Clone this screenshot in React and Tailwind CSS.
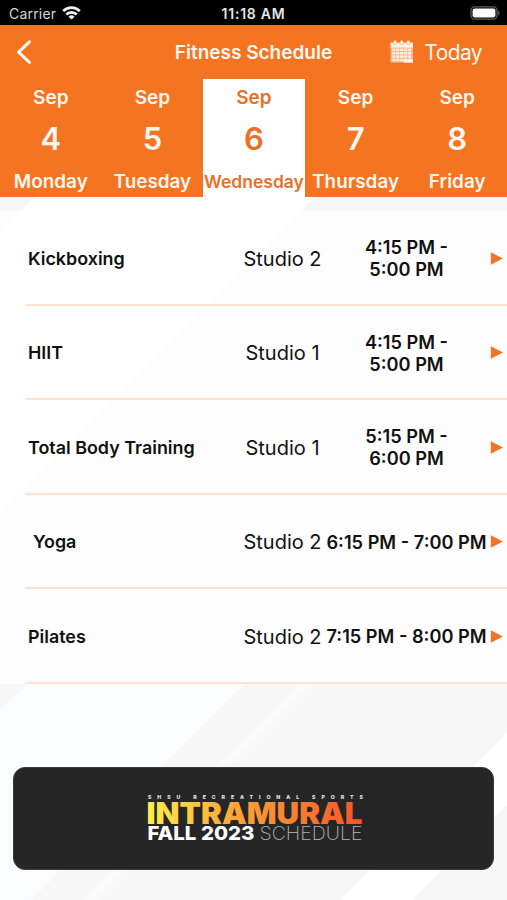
import { useState } from 'react';

const days = [
    { month: 'Sep', date: 4, name: 'Monday' },
    { month: 'Sep', date: 5, name: 'Tuesday' },
    { month: 'Sep', date: 6, name: 'Wednesday' },
    { month: 'Sep', date: 7, name: 'Thursday' },
    { month: 'Sep', date: 8, name: 'Friday' },
];

const classes = [
    { name: 'Kickboxing', room: 'Studio 2', time: ['4:15 PM -', '5:00 PM'] },
    { name: 'HIIT', room: 'Studio 1', time: ['4:15 PM -', '5:00 PM'] },
    { name: 'Total Body Training', room: 'Studio 1', time: ['5:15 PM -', '6:00 PM'] },
    { name: 'Yoga', room: 'Studio 2', time: ['6:15 PM - 7:00 PM'], indent: true },
    { name: 'Pilates', room: 'Studio 2', time: ['7:15 PM - 8:00 PM'] },
];

function StatusBar() {
    return (
        <div className="grid h-[25px] grid-cols-3 items-center bg-black pt-[3px] text-white">
            <div className="flex items-center gap-[6px] pl-[9px]">
                <span className="text-[14px] leading-none tracking-[0.2px] text-[#d6d6d6]">Carrier</span>
                <svg width="19" height="14" viewBox="0 0 19 14" className="mb-0.5">
                    <g fill="none" stroke="#f2f2f2" strokeWidth="2.7">
                        <path d="M1.2 5.1a11.7 11.7 0 0 1 16.6 0" />
                        <path d="M4.3 8.5a7.3 7.3 0 0 1 10.4 0" />
                    </g>
                    <path d="M9.5 13.6 6.5 10.7a4.3 4.3 0 0 1 6 0z" fill="#f2f2f2" />
                </svg>
            </div>
            <span className="text-center text-[14px] font-semibold leading-none tracking-[0.75px] text-[#e4e4e4]">11:18 AM</span>
            <div className="flex justify-end pr-[6px]">
                <svg width="31" height="14" viewBox="0 0 31 14" className="mb-0.5">
                    <rect x="1" y="0.8" width="26" height="12.4" rx="3.6" fill="none" stroke="#5d5d5d" strokeWidth="1.3" />
                    <rect x="2.6" y="2.4" width="22.8" height="9.2" rx="2" fill="#fff" />
                    <path d="M28.2 4.6c2 .8 2 4 0 4.8z" fill="#5d5d5d" />
                </svg>
            </div>
        </div>
    );
}

function CalendarIcon() {
    const cells = [];
    for (let row = 0; row < 4; row++) {
        for (let col = 0; col < 5; col++) {
            cells.push(<rect key={`${row}-${col}`} x={2.2 + col * 4} y={8.6 + row * 3.4} width="3.1" height="2.5" />);
        }
    }
    return (
        <svg width="24" height="24" viewBox="0 0 24 24" fill="#fff3e6">
            <path d="M0.5 2.6h22.5v5H0.5z" />
            <rect x="3.4" y="0.3" width="3.4" height="4.4" rx="1.6" stroke="#f57421" strokeWidth="0.4" />
            <rect x="10" y="0.3" width="3.4" height="4.4" rx="1.6" stroke="#f57421" strokeWidth="0.4" />
            <rect x="16.6" y="0.3" width="3.4" height="4.4" rx="1.6" stroke="#f57421" strokeWidth="0.4" />
            <path d="M0.5 7H23v15.6H0.5z" fillOpacity="0.5" />
            {cells}
            <path d="M13.5 19.4H23v3.2h-9.5z" />
        </svg>
    );
}

function NavBar() {
    return (
        <div className="grid h-[54px] grid-cols-[1fr_160px_1fr] items-center text-[#fff7ef]">
            <button type="button" aria-label="Back" className="pl-[15px]">
                <svg width="17" height="26" viewBox="0 0 17 26" fill="none" stroke="currentColor" strokeWidth="3">
                    <path d="M14.5 2.8 3.5 13.1 14.5 23.4" strokeLinecap="round" strokeLinejoin="round" />
                </svg>
            </button>
            <h1 className="whitespace-nowrap pt-0.5 text-center text-[19px] font-semibold">Fitness Schedule</h1>
            <button type="button" className="flex items-center justify-end gap-[10px] pr-[25px]">
                <CalendarIcon />
                <span className="pt-px text-[21px] tracking-[-0.6px]">Today</span>
            </button>
        </div>
    );
}

function DayPicker({ selected, onSelect }) {
    return (
        <div className="grid h-[118px] grid-cols-[repeat(5,101.6px)]">
            {days.map((day) => (
                <button
                    type="button"
                    key={day.date}
                    onClick={() => onSelect(day.date)}
                    className={`flex flex-col items-center font-semibold ${selected === day.date ? 'bg-white text-[#ea7026]' : 'text-[#fff7ef]'}`}
                >
                    <span className="mt-[6px] text-[19px] leading-[26px]">{day.month}</span>
                    <span className="mt-[8px] text-[31px] leading-[40px]">{day.date}</span>
                    <span className={`mt-[10px] leading-[26px] ${day.name.length > 8 ? 'text-[17.5px]' : 'text-[18.9px]'}`}>
                        {day.name}
                    </span>
                </button>
            ))}
        </div>
    );
}

function ClassRow({ item }) {
    return (
        <li className="ml-[25px] flex h-[94.5px] items-center border-b-2 border-[#fbe2d1] pt-[2px]">
            <span className={`w-[215px] pt-0.5 text-[17.9px] font-semibold ${item.indent ? 'pl-2' : 'pl-[3px]'}`}>{item.name}</span>
            <span className="w-[85px] whitespace-nowrap pt-px text-center text-[20px]">{item.room}</span>
            <span className="w-[163px] whitespace-nowrap text-center text-[18.2px] font-semibold leading-[22px]">
                {item.time.map((line) => (
                    <span key={line} className="block">{line}</span>
                ))}
            </span>
            <svg width="13" height="13" viewBox="0 0 13 13" className="ml-[2px]">
                <path d="M0.8 0.3 13 6.5 0.8 12.7z" fill="#f27424" />
            </svg>
        </li>
    );
}

// Diagonal stripes behind the list and the banner
function Backdrop() {
    return (
        <svg className="absolute inset-0 h-full w-full" viewBox="0 197 507 703" preserveAspectRatio="none">
            <rect y="197" width="507" height="703" fill="#fbfcfd" />
            <path d="M0 197h35L0 232z" fill="#f7f7f7" />
            <path d="M35 197h280L0 512V232z" fill="#fff" />
            <path d="M315 197h192v223L30 900H507V197z" fill="#f7f7f7" />
            <path d="M315 197h192v223L243 684 0 684V512z" fill="#f7f7f7" />
            <path d="M0 684h28L0 708z" fill="#f7f7f7" />
            <path d="M300 684h12L96 900H82z" fill="#fafafa" />
            <path d="M507 733v72L412 900h-72z" fill="#fff" />
        </svg>
    );
}

function Banner() {
    return (
        <div className="flex h-[103px] items-center justify-center rounded-[12px] border border-[#3a3a3a] bg-[#262626]">
            <svg width="220" height="52" viewBox="0 0 220 52" fontFamily="Inter, sans-serif">
                <defs>
                    <linearGradient id="sunset" x1="0" x2="1">
                        <stop offset="0" stopColor="#ffee4a" />
                        <stop offset="0.4" stopColor="#fca638" />
                        <stop offset="1" stopColor="#f45528" />
                    </linearGradient>
                </defs>
                <text x="4" y="7" fontSize="5.2" fontWeight="800" fill="#e8e8e8" textLength="215">SHSU RECREATIONAL SPORTS</text>
                <text x="2.5" y="31.5" fontSize="29.5" fontWeight="900" fill="url(#sunset)" textLength="216" lengthAdjust="spacingAndGlyphs">INTRAMURAL</text>
                <text x="3.5" y="48" fontSize="19.2" fontWeight="800" fill="#fff" textLength="107" lengthAdjust="spacingAndGlyphs">FALL 2023</text>
                <text x="115.5" y="48" fontSize="19.2" fontWeight="200" fill="#b5b5b5" textLength="103" lengthAdjust="spacingAndGlyphs">SCHEDULE</text>
            </svg>
        </div>
    );
}

export default function App() {
    const [selected, setSelected] = useState(6);

    return (
        <div className="flex h-[900px] w-[507px] flex-col overflow-hidden bg-white font-['Inter',sans-serif] text-[#111]">
            <StatusBar />
            <header className="overflow-hidden bg-[#f57421]">
                <NavBar />
                <DayPicker selected={selected} onSelect={setSelected} />
            </header>
            <main className="relative flex-1">
                <Backdrop />
                <div className="relative pt-[14px]">
                    <ul className="bg-white/80">
                        {classes.map((item) => (
                            <ClassRow key={item.name} item={item} />
                        ))}
                    </ul>
                    <div className="px-[13px] pt-[83px]">
                        <Banner />
                    </div>
                </div>
            </main>
        </div>
    );
}
